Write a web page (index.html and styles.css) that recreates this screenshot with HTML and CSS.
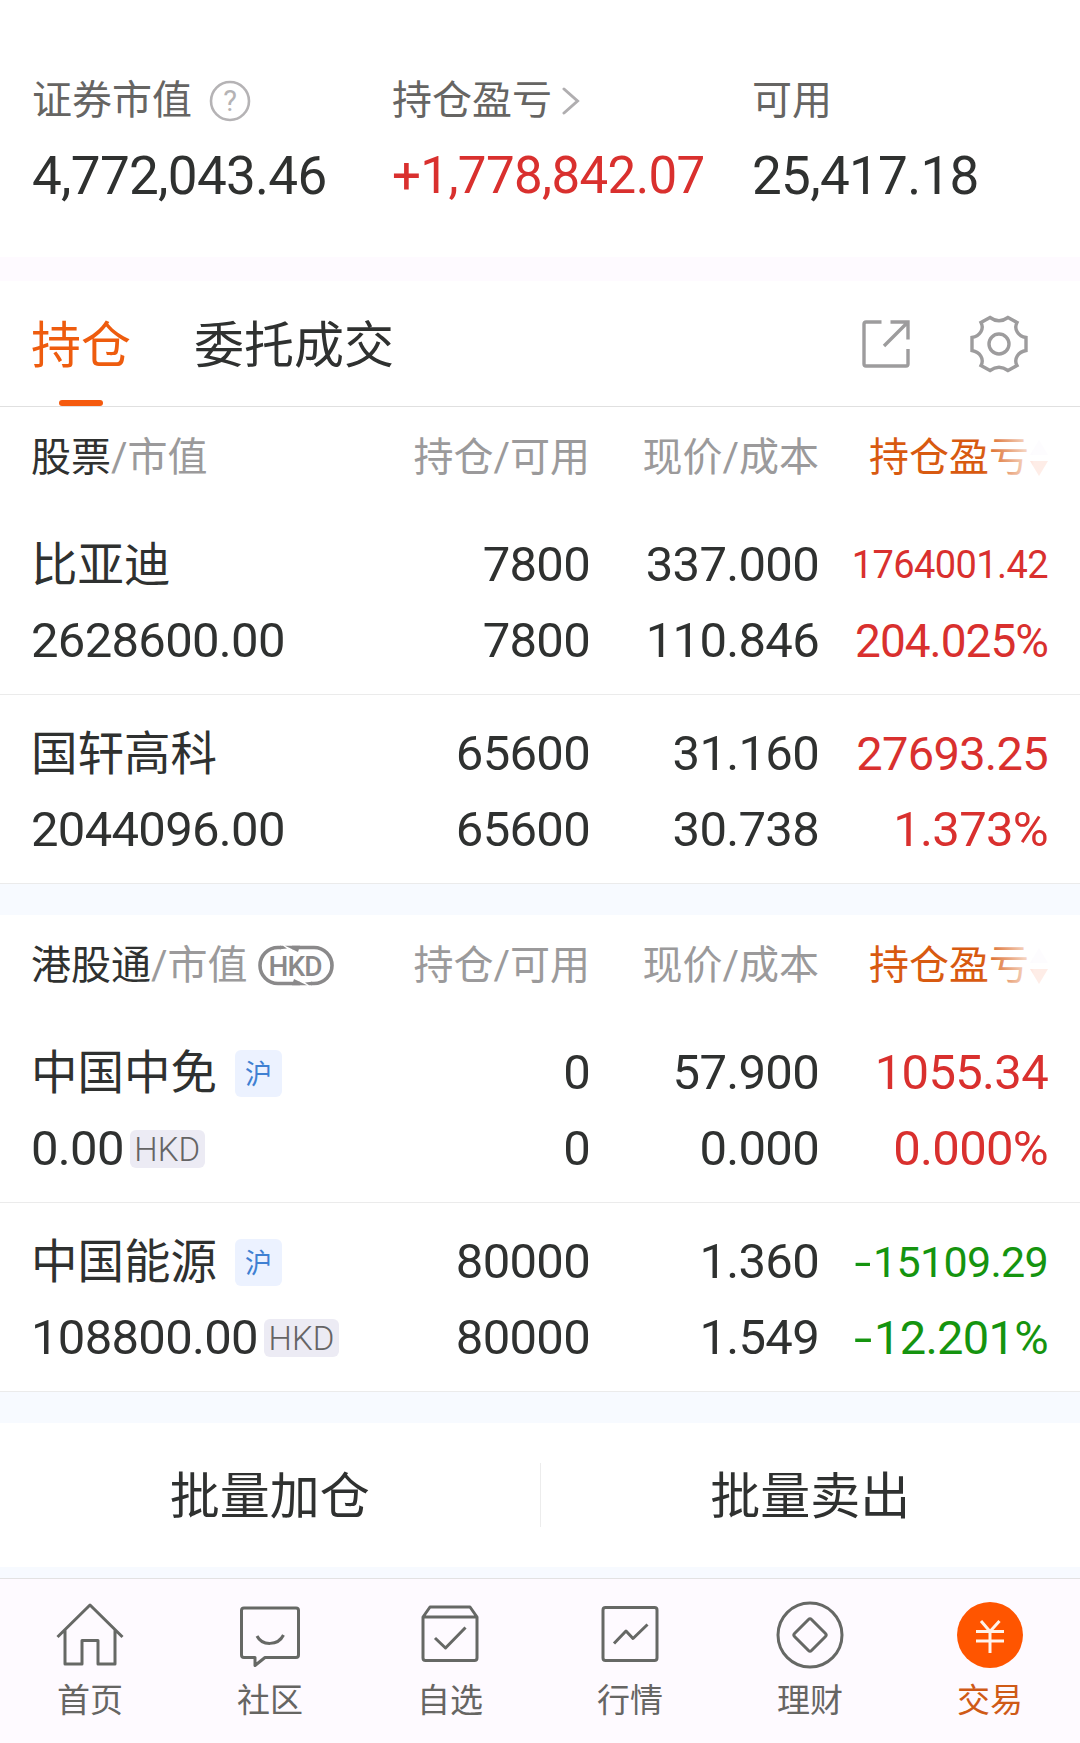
FILE: index.html
```html
<!DOCTYPE html>
<html lang="zh-CN">

<head>
  <meta charset="UTF-8">
  <meta name="viewport" content="width=device-width, initial-scale=1.0">
  <title>持仓</title>
  <link rel="stylesheet" href="styles.css">
</head>

<body>
  <div class="wrapper">

    <div class="summary">
      <div class="summary-item">
        <div class="summary-label">证券市值
          <svg class="icon-help" width="42" height="42" viewBox="0 0 42 42">
            <circle cx="21" cy="21" r="19" fill="none" stroke="#b5b3b5" stroke-width="2.6" />
            <text x="21" y="31" text-anchor="middle">?</text>
          </svg>
        </div>
        <div class="summary-value">4,772,043.46</div>
      </div>
      <div class="summary-item">
        <div class="summary-label">持仓盈亏
          <svg class="icon-arrow" width="18" height="28" viewBox="0 0 18 28">
            <path d="M2 2 L15.500 14 L2 26" />
          </svg>
        </div>
        <div class="summary-value profit">+1,778,842.07</div>
      </div>
      <div class="summary-item">
        <div class="summary-label">可用</div>
        <div class="summary-value">25,417.18</div>
      </div>
    </div>

    <div class="gap-top"></div>

    <div class="tabs">
      <div class="tab active">持仓</div>
      <div class="tab">委托成交</div>
      <div class="tools">
        <svg width="48" height="48" viewBox="0 0 48 48">
          <path d="M19.500 2 H4 Q2 2 2 4 V44 Q2 46 4 46 H44 Q46 46 46 44 V29" />
          <path d="M28.500 2 H46 V19.500 M45 3 L22 26" />
        </svg>
        <svg width="58" height="58" viewBox="0 0 58 58">
          <path d="M20 2.500 Q29 9 38 2.500 L47 7.500 C43.500 14 48 21 56 22.500 V35.500 C48 37 43.500 44 47 50.500 L38 55.500 Q29 49 20 55.500 L11 50.500 C14.500 44 10 37 2 35.500 V22.500 C10 21 14.500 14 11 7.500 Z" />
          <circle cx="29" cy="29" r="10" />
        </svg>
      </div>
    </div>

    <!-- A股 -->
    <div class="table">
      <div class="row head">
        <div class="cell"><b>股票</b>/市值</div>
        <div class="cell">持仓/可用</div>
        <div class="cell">现价/成本</div>
        <div class="cell sort">持仓盈亏
          <svg width="18" height="36" viewBox="0 0 18 36">
            <path d="M9 0 L18 15 H0 Z" fill="#efe6f8" />
            <path d="M0 21 H18 L9 36 Z" fill="#f86a3c" />
          </svg>
        </div>
      </div>
      <div class="row">
        <div class="cell"><div class="name">比亚迪</div><div>2628600.00</div></div>
        <div class="cell"><div>7800</div><div>7800</div></div>
        <div class="cell"><div>337.000</div><div>110.846</div></div>
        <div class="cell profit"><div class="fs-38">1764001.42</div><div class="fs-46">204.025%</div></div>
      </div>
      <div class="row">
        <div class="cell"><div class="name">国轩高科</div><div>2044096.00</div></div>
        <div class="cell"><div>65600</div><div>65600</div></div>
        <div class="cell"><div>31.160</div><div>30.738</div></div>
        <div class="cell profit"><div class="fs-47">27693.25</div><div>1.373%</div></div>
      </div>
    </div>

    <div class="gap"></div>

    <!-- 港股通 -->
    <div class="table">
      <div class="row head">
        <div class="cell"><b>港股通</b>/市值
          <svg class="icon-hkd" width="76" height="42" viewBox="0 0 76 42">
            <path class="line" d="M23 2.500 H20 A18 18 0 0 0 20 38.500 H42" />
            <path class="line" d="M53 38.500 H56 A18 18 0 0 0 56 2.500 H34" />
            <path d="M22 0.700 H25 L29 3.500 L22 4.300 Z M27 0.700 H42 L40 7 Z M49 40.300 H34 L36 34 Z M54 40.300 H51 L47 37.500 L54 36.700 Z" />
            <text x="37.500" y="31" text-anchor="middle" textLength="54">HKD</text>
          </svg>
        </div>
        <div class="cell">持仓/可用</div>
        <div class="cell">现价/成本</div>
        <div class="cell sort">持仓盈亏
          <svg width="18" height="36" viewBox="0 0 18 36">
            <path d="M9 0 L18 15 H0 Z" fill="#efe6f8" />
            <path d="M0 21 H18 L9 36 Z" fill="#f86a3c" />
          </svg>
        </div>
      </div>
      <div class="row">
        <div class="cell">
          <div class="name">中国中免<span class="market">沪</span></div>
          <div>0.00<span class="currency">HKD</span></div>
        </div>
        <div class="cell"><div>0</div><div>0</div></div>
        <div class="cell"><div>57.900</div><div>0.000</div></div>
        <div class="cell profit"><div>1055.34</div><div>0.000%</div></div>
      </div>
      <div class="row">
        <div class="cell">
          <div class="name">中国能源<span class="market">沪</span></div>
          <div>108800.00<span class="currency">HKD</span></div>
        </div>
        <div class="cell"><div>80000</div><div>80000</div></div>
        <div class="cell"><div>1.360</div><div>1.549</div></div>
        <div class="cell loss"><div class="fs-43"><span class="minus">-</span>15109.29</div><div class="fs-47"><span class="minus">-</span>12.201%</div></div>
      </div>
    </div>

    <div class="gap"></div>

    <div class="actions">
      <div class="action">批量加仓</div>
      <div class="action">批量卖出</div>
    </div>

    <div class="nav">
      <div class="nav-item">
        <svg width="68" height="68" viewBox="0 0 68 68">
          <path d="M1.500 36 L34 4 L66.500 36 M9 29 V63 H26 V39.500 H42 V63 H59 V29" />
        </svg>
        首页
      </div>
      <div class="nav-item">
        <svg width="68" height="68" viewBox="0 0 68 68">
          <path d="M8 7 H60 Q62.500 7 62.500 9.500 V54 Q62.500 56.500 60 56.500 H29 L19 64.500 V56.500 H8 Q5.500 56.500 5.500 54 V9.500 Q5.500 7 8 7 Z" />
          <path d="M21 35 C26 45 42 45 47.500 34" />
        </svg>
        社区
      </div>
      <div class="nav-item">
        <svg width="68" height="68" viewBox="0 0 68 68">
          <path d="M7 16 L14 6 H54 L61 16 V57 Q61 59.500 58.500 59.500 H9.500 Q7 59.500 7 57 Z M7 16 H61" />
          <path d="M19 37 L29.500 47 L49.500 26.500" />
        </svg>
        自选
      </div>
      <div class="nav-item">
        <svg width="68" height="68" viewBox="0 0 68 68">
          <rect x="7" y="6.500" width="54" height="53" rx="2.500" />
          <path d="M18 42.500 L30 30 L37 37.500 L51.500 23.500" />
        </svg>
        行情
      </div>
      <div class="nav-item">
        <svg width="68" height="68" viewBox="0 0 68 68">
          <circle cx="34" cy="34" r="32" />
          <path d="M32.500 18.500 Q34 17 35.500 18.500 L49.500 32.500 Q51 34 49.500 35.500 L35.500 49.500 Q34 51 32.500 49.500 L18.500 35.500 Q17 34 18.500 32.500 Z" />
        </svg>
        理财
      </div>
      <div class="nav-item current">
        <svg width="68" height="68" viewBox="0 0 68 68">
          <circle cx="34" cy="34" r="33" />
          <path d="M25 20 L34 30.500 L43.500 20 M20 30.500 H48 M20 40 H48 M34 30 V52" />
        </svg>
        交易
      </div>
    </div>

  </div>
</body>

</html>
```

FILE: styles.css
```css
* {
  margin: 0;
  padding: 0;
  box-sizing: border-box;
}

body {
  height: 1743px;
  overflow: hidden;
  background-color: #fff;
  color: #2f3130;
  font-family: Roboto, "Noto Sans CJK SC", sans-serif;
}

.wrapper {
  width: 1080px;
  height: 1743px;
  display: flex;
  flex-direction: column;
  overflow: hidden;
}

svg {
  flex: none;
  fill: none;
}

.profit {
  color: #d9302e;
}
.loss {
  color: #15940f;
}

/* верхний блок с суммами */
.summary {
  height: 257px;
  padding: 71px 0 0 32px;
  display: flex;
}
.summary-item {
  flex: none;
  width: 360px;
}
.summary-label {
  height: 60px;
  display: flex;
  align-items: center;
  color: #666563;
  font-size: 40px;
  line-height: 60px;
}
.summary-value {
  margin-top: 13px;
  font-size: 53px;
  line-height: 64px;
  letter-spacing: -0.7px;
}
.summary-value.profit {
  font-size: 51px;
  letter-spacing: -0.6px;
}
.icon-help {
  margin-left: 17px;
}
.icon-help text {
  fill: #b5b3b5;
  font-size: 29px;
}
.icon-arrow {
  margin-left: 10px;
}
.icon-arrow path {
  stroke: #b0aeb0;
  stroke-width: 3;
  stroke-linecap: round;
}

.gap-top {
  height: 24px;
  background-color: #fefaff;
}
.gap {
  height: 31px;
  background-color: #f7faff;
}

/* вкладки */
.tabs {
  height: 126px;
  padding: 0 52px 0 31px;
  display: flex;
  border-bottom: 1px solid #e0e0e0;
}
.tab {
  position: relative;
  height: 125px;
  margin-right: 63px;
  font-size: 50px;
  line-height: 130px;
}
.tab.active {
  color: #ee5c0e;
}
.tab.active::after {
  content: "";
  position: absolute;
  left: 28px;
  bottom: 0;
  width: 44px;
  height: 6px;
  border-radius: 3px;
  background-color: #f55a0e;
}
.tools {
  margin-left: auto;
  display: flex;
  align-items: center;
  gap: 60px;
}
.tools svg {
  stroke: #9d9c9d;
  stroke-width: 3.4;
}

/* таблица */
.row {
  height: 189px;
  padding: 21px 32px 0 31px;
  display: grid;
  grid-template-columns: 331px 228px 229px 229px;
  border-bottom: 1px solid #ebebeb;
  font-size: 49px;
  line-height: 76px;
  letter-spacing: -0.7px;
}
.cell {
  text-align: right;
  white-space: nowrap;
}
.cell > div {
  height: 76px;
}
.cell:first-child {
  text-align: left;
}
.cell:first-child > div {
  display: flex;
  align-items: center;
}
.name {
  font-size: 46.5px;
  letter-spacing: 0;
}
.row.head {
  height: 99px;
  padding-top: 0;
  border-bottom: none;
  color: #9b9a9b;
  font-size: 40px;
  line-height: 102px;
  letter-spacing: 0;
}
.head b {
  color: #2f3130;
  font-weight: 400;
}
.head .cell:first-child {
  height: 102px;
  display: flex;
  align-items: center;
}
.head .sort {
  position: relative;
  height: 102px;
  display: flex;
  align-items: center;
  justify-content: flex-end;
  color: #d85a10;
}
.sort svg {
  margin-left: 1px;
}
/* затухание справа */
.sort::after {
  content: "";
  position: absolute;
  right: 0;
  top: 0;
  width: 66px;
  height: 99px;
  background: linear-gradient(to right, rgba(255, 255, 255, 0), rgba(255, 255, 255, 0.88) 52px);
}

.fs-38 {
  font-size: 38px;
  letter-spacing: -0.6px;
}
.fs-43 {
  font-size: 43px;
}
.fs-46 {
  font-size: 46px;
  letter-spacing: -1px;
}
.fs-47 {
  font-size: 47px;
}
.minus {
  display: inline-block;
  margin-right: 3px;
  transform: scaleX(1.4);
  transform-origin: right;
}

.icon-hkd {
  margin-left: 10px;
}
.icon-hkd path,
.icon-hkd text {
  fill: #8a898a;
}
.icon-hkd .line {
  fill: none;
  stroke: #8a898a;
  stroke-width: 3.6;
}
.icon-hkd text {
  font-size: 28px;
  font-weight: 500;
}
.market {
  width: 47px;
  height: 47px;
  margin-left: 18px;
  border-radius: 6px;
  background-color: #ecf2ff;
  color: #3f80d2;
  font-size: 27px;
  line-height: 50px;
  text-align: center;
}
.currency {
  width: 75px;
  height: 38px;
  margin-left: 6px;
  border-radius: 6px;
  background-color: #ecebf4;
  color: #656465;
  font-size: 33px;
  font-weight: 300;
  line-height: 40px;
  letter-spacing: 0;
  text-align: center;
}

/* кнопки */
.actions {
  height: 155px;
  display: flex;
  align-items: center;
  border-bottom: 11px solid #f7faff;
}
.action {
  flex: 1;
  height: 64px;
  font-size: 50px;
  line-height: 68px;
  text-align: center;
}
.action:first-child {
  border-right: 1px solid #ececec;
}

/* нижнее меню */
.nav {
  flex: 1;
  padding-top: 22px;
  display: flex;
  border-top: 1px solid #e2e2e2;
  background-color: #fefaff;
}
.nav-item {
  flex: 1;
  display: flex;
  flex-direction: column;
  align-items: center;
  color: #666563;
  font-size: 33px;
  line-height: 64px;
}
.nav-item svg {
  stroke: #666865;
  stroke-width: 3;
  stroke-linejoin: round;
}
.nav-item.current {
  color: #cf5a17;
}
.current circle {
  fill: #ff5500;
  stroke: none;
}
.current path {
  stroke: #fff3ea;
}
```
